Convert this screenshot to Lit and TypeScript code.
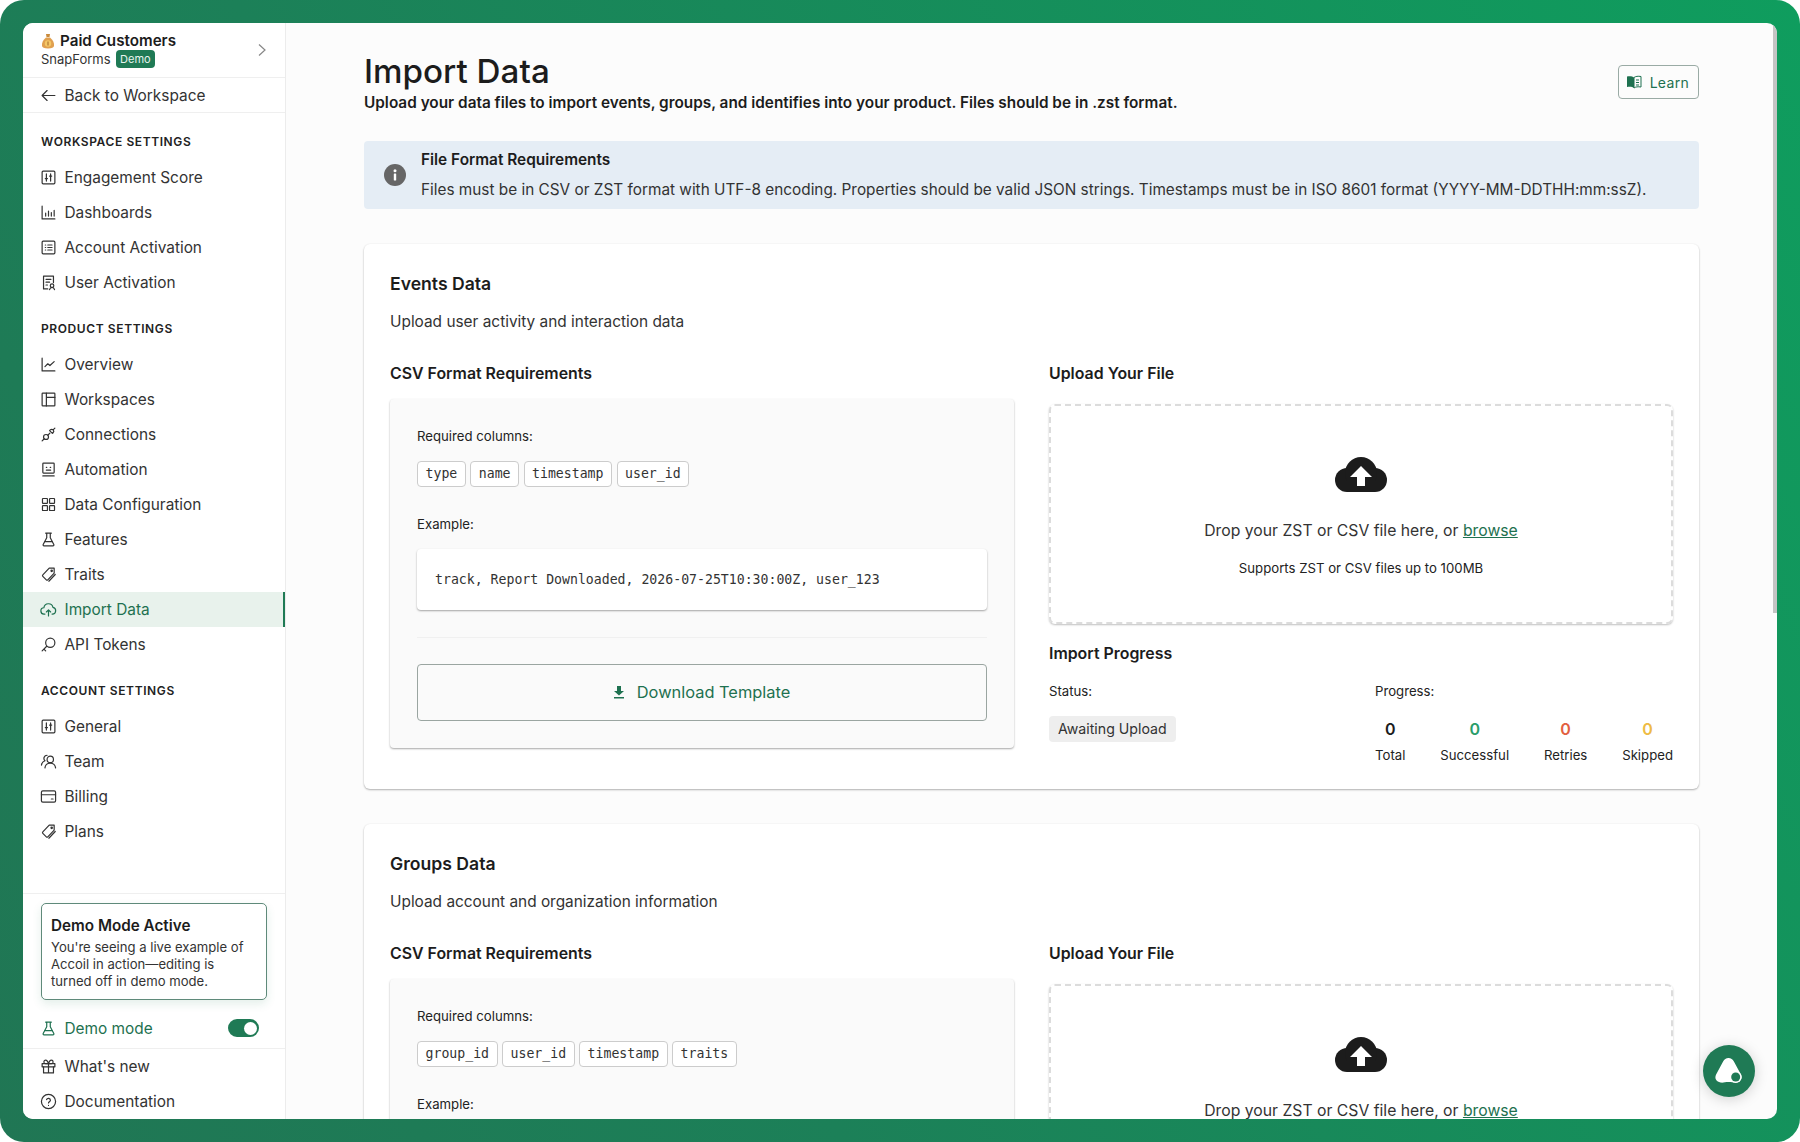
import { LitElement, html, css, svg } from 'lit';
import { customElement } from 'lit/decorators.js';

const G = css`#1f7a55`;
const GT = css`#1e7150`;

const line = (body: unknown, size = 17) => html`<svg class="ico" width=${size} height=${size} viewBox="0 0 24 24" fill="none" stroke="currentColor" stroke-width="1.7" stroke-linecap="round" stroke-linejoin="round">${body}</svg>`;

const sliders = svg`<rect x="3" y="3" width="18" height="18" rx="1.5"/><path d="M9 7v10M15 7v10"/><path d="M7.5 13.5h3M13.5 10h3"/>`;
const tag = svg`<path d="M13 3h7v7l-9 9.5a1.5 1.5 0 0 1-2.1 0L4 14.6a1.5 1.5 0 0 1 0-2.1z"/><circle cx="16.5" cy="6.8" r="1"/><path d="M21.5 12 12.5 21.5"/>`;
const flask = svg`<path d="M8 3h8M9.5 3v6.5L4.5 19a1.4 1.4 0 0 0 1.2 2h12.6a1.4 1.4 0 0 0 1.2-2L14.5 9.5V3"/><path d="M7 15h10"/>`;

const icons: Record<string, unknown> = {
  back: svg`<path d="M21 12H3M10 5l-7 7 7 7"/>`,
  sliders,
  bars: svg`<path d="M3 3v18h18"/><path d="M8 17v-4M12 17v-7M16 17v-5M20 17V9"/>`,
  list: svg`<rect x="3" y="3" width="18" height="18" rx="1.5"/><path d="M11 8.5h6M11 12h6M11 15.5h6M7.5 8.5h.5M7.5 12h.5M7.5 15.5h.5"/>`,
  userdoc: svg`<path d="M11 21H5V3h14v9"/><path d="M8.5 7.5h7M8.5 11.5h5M8.5 15.5h2"/><circle cx="17" cy="16.5" r="2.5"/><path d="M13.5 22c.5-2 2-3 3.5-3s3 1 3.5 3"/>`,
  chart: svg`<path d="M3 3v18h18"/><path d="M7 15l4-4 3 2.5L20 8"/>`,
  layout: svg`<rect x="3" y="3" width="18" height="18" rx="1"/><path d="M9 3v18M9 9h12"/>`,
  plug: svg`<path d="M3 21l3-3"/><circle cx="8.5" cy="15.5" r="3.5"/><path d="M11 13l3-3"/><path d="M13.5 6.5l4 4 1-1a2.8 2.8 0 0 0-4-4zM18.5 5.5 21 3"/>`,
  robot: svg`<rect x="4" y="3" width="16" height="14" rx="1"/><path d="M9 9h.5M14.5 9h.5M9 13h6M4 21h16"/>`,
  grid: svg`<rect x="3.5" y="3.5" width="7" height="7" rx=".8"/><rect x="13.5" y="3.5" width="7" height="7" rx=".8"/><rect x="3.5" y="13.5" width="7" height="7" rx=".8"/><rect x="13.5" y="13.5" width="7" height="7" rx=".8"/>`,
  flask,
  tag,
  cloud: svg`<path d="M7 18.5H6a4.5 4.5 0 0 1-.5-9 6.5 6.5 0 0 1 12.8-.5 4.8 4.8 0 0 1-.8 9.5H17"/><path d="M12 21v-8M9 15.5l3-3 3 3"/>`,
  key: svg`<circle cx="14.5" cy="9.5" r="6.5"/><path d="M9.5 14.5 3 21M5.5 18.5 8 21"/>`,
  team: svg`<circle cx="14.5" cy="9" r="4.5"/><path d="M7 21c.4-4 3.5-6.5 7.5-6.5S21.5 17 22 21"/><path d="M10 3.2A4.5 4.5 0 0 0 7 11c-2.5 1-4.5 3-5 6"/>`,
  card: svg`<rect x="2" y="4" width="20" height="16" rx="2"/><path d="M2 9.5h20M16 15.5h2.5"/>`,
  gift: svg`<rect x="3" y="8" width="18" height="4.5"/><path d="M5 12.5V21h14v-8.5M12 8v13"/><path d="M12 8S10.5 3 8 3a2.5 2.5 0 0 0 0 5zM12 8s1.5-5 4-5a2.5 2.5 0 0 1 0 5z"/>`,
  help: svg`<circle cx="12" cy="12" r="10"/><path d="M9.3 9.3a2.8 2.8 0 0 1 5.4.9c0 1.8-2.7 2.3-2.7 3.8M12 17.5h.01"/>`,
};

type Item = { label: string; icon: string; active?: boolean };

const sections: { title: string; items: Item[] }[] = [
  { title: 'WORKSPACE SETTINGS', items: [
    { label: 'Engagement Score', icon: 'sliders' },
    { label: 'Dashboards', icon: 'bars' },
    { label: 'Account Activation', icon: 'list' },
    { label: 'User Activation', icon: 'userdoc' },
  ] },
  { title: 'PRODUCT SETTINGS', items: [
    { label: 'Overview', icon: 'chart' },
    { label: 'Workspaces', icon: 'layout' },
    { label: 'Connections', icon: 'plug' },
    { label: 'Automation', icon: 'robot' },
    { label: 'Data Configuration', icon: 'grid' },
    { label: 'Features', icon: 'flask' },
    { label: 'Traits', icon: 'tag' },
    { label: 'Import Data', icon: 'cloud', active: true },
    { label: 'API Tokens', icon: 'key' },
  ] },
  { title: 'ACCOUNT SETTINGS', items: [
    { label: 'General', icon: 'sliders' },
    { label: 'Team', icon: 'team' },
    { label: 'Billing', icon: 'card' },
    { label: 'Plans', icon: 'tag' },
  ] },
];

const imports = [
  {
    title: 'Events Data',
    sub: 'Upload user activity and interaction data',
    cols: ['type', 'name', 'timestamp', 'user_id'],
    example: 'track, Report Downloaded, 2026-07-25T10:30:00Z, user_123',
  },
  {
    title: 'Groups Data',
    sub: 'Upload account and organization information',
    cols: ['group_id', 'user_id', 'timestamp', 'traits'],
    example: 'group, Acme Inc, 2026-07-25T10:30:00Z, user_123',
  },
];

const stats = [
  { label: 'Total', cls: '' },
  { label: 'Successful', cls: 'ok' },
  { label: 'Retries', cls: 'retry' },
  { label: 'Skipped', cls: 'skip' },
];

@customElement('app-root')
export class AppRoot extends LitElement {
  static styles = css`
    :host {
      display: block;
      width: 1800px;
      height: 1142px;
      font-family: Inter, 'Noto Sans', sans-serif;
      color: #1c1c1c;
      background: #fff;
    }
    * { box-sizing: border-box; }
    .frame {
      height: 1142px;
      padding: 23px;
      border-radius: 24px;
      background: linear-gradient(62deg, #207654 0%, #1c8058 35%, #0f9d5e 100%);
    }
    .window {
      position: relative;
      display: flex;
      height: 1096px;
      border-radius: 10px;
      overflow: hidden;
      background: #fcfcfc;
    }
    .side {
      flex: none;
      display: flex;
      flex-direction: column;
      width: 263px;
      height: 100%;
      background: #fff;
      border-right: 1px solid #ececec;
    }
    .head {
      display: flex;
      align-items: center;
      justify-content: space-between;
      height: 55px;
      padding: 0 18px 1px;
      border-bottom: 1px solid #efefef;
    }
    .head-title {
      display: flex;
      align-items: center;
      gap: 5px;
      font-size: 15.2px;
      font-weight: 600;
      line-height: 18px;
    }
    .head-sub {
      display: flex;
      align-items: center;
      gap: 5px;
      font-size: 13px;
      line-height: 18px;
      color: #333;
    }
    .badge {
      padding: 0 4.5px;
      height: 18px;
      border-radius: 4px;
      background: ${G};
      color: #e8f4ee;
      font-size: 11px;
      line-height: 18px;
    }
    .chev { color: #888; }
    .row {
      display: flex;
      align-items: center;
      gap: 8px;
      height: 35px;
      padding-left: 16.5px;
      font-size: 15.4px;
      color: #333;
    }
    .row.active {
      background: #e8f2ec;
      color: ${GT};
      border-right: 2px solid ${G};
    }
    .ico { flex: none; display: block; }
    .back { border-bottom: 1px solid #efefef; }
    .nav { padding-top: 18.5px; }
    .group { margin-bottom: 18.5px; }
    .group h4 {
      margin: 0 0 8.5px;
      padding-left: 18px;
      font-size: 12px;
      line-height: 20px;
      font-weight: 600;
      letter-spacing: .6px;
      color: #222;
    }
    .foot {
      margin-top: auto;
      height: 226px;
      border-top: 1px solid #efefef;
    }
    .demo {
      margin: 9px 18px 0;
      height: 97px;
      padding: 12px 18px 0 9px;
      border: 1px solid #5f8a7a;
      border-radius: 5px;
      background: #fff;
      box-shadow: 0 4px 10px rgba(31, 122, 85, .12);
    }
    .demo b {
      display: block;
      font-size: 15.25px;
      font-weight: 600;
      line-height: 20px;
      margin-bottom: 2.5px;
    }
    .demo p {
      margin: 0;
      font-size: 13.1px;
      line-height: 17px;
      color: #333;
    }
    .mode {
      display: flex;
      align-items: center;
      gap: 8px;
      height: 39px;
      margin-top: 10px;
      padding: 0 26px 2px 16.5px;
      border-bottom: 1px solid #efefef;
      font-size: 15.4px;
      color: ${GT};
    }
    .toggle {
      margin-left: auto;
      display: flex;
      justify-content: flex-end;
      align-items: center;
      width: 31px;
      height: 18px;
      padding: 2px;
      border-radius: 9px;
      background: ${G};
    }
    .toggle i {
      width: 13px;
      height: 13px;
      border-radius: 50%;
      background: #fff;
    }
    .main {
      flex: 1;
      min-width: 0;
      height: 100%;
      overflow: hidden;
      padding: 28px 78px 0;
    }
    .top {
      display: flex;
      justify-content: space-between;
      align-items: flex-start;
    }
    h1 {
      margin: 0 0 1px;
      font-size: 33.2px;
      line-height: 40px;
      font-weight: 500;
      color: #1c1c1c;
    }
    .lead {
      margin: 0;
      font-size: 15.35px;
      line-height: 22px;
      font-weight: 600;
      color: #1c1c1c;
    }
    .learn {
      display: flex;
      align-items: center;
      gap: 8px;
      height: 34px;
      margin-top: 14px;
      padding: 0 9px 0 6.5px;
      border: 1px solid #9aaba5;
      border-radius: 4px;
      font-size: 14px;
      letter-spacing: .3px;
      color: ${GT};
    }
    .note {
      display: flex;
      align-items: center;
      gap: 15px;
      height: 68px;
      margin-top: 27px;
      padding: 0 0 0 20px;
      border-radius: 4px;
      background: #e5edf5;
      font-size: 15.35px;
      color: #333;
    }
    .note b {
      display: block;
      font-size: 15.4px;
      font-weight: 600;
      line-height: 20px;
      margin-bottom: 10px;
      color: #1c1c1c;
    }
    .note span { display: block; line-height: 20px; }
    .card {
      margin-top: 35px;
      padding: 28px 26px 25.5px;
      background: #fff;
      border-radius: 6px;
      box-shadow: 0 1px 2px rgba(0, 0, 0, .3), 0 0 2px rgba(0, 0, 0, .04);
    }
    h2 {
      margin: 0;
      font-size: 17.6px;
      line-height: 24px;
      font-weight: 600;
    }
    .card > p {
      margin: 15px 0 0;
      font-size: 15.4px;
      line-height: 22px;
      color: #333;
    }
    .cols {
      display: grid;
      grid-template-columns: 624px 624px;
      gap: 35px;
      margin-top: 28.5px;
    }
    h3 {
      margin: 0;
      font-size: 15.9px;
      line-height: 24px;
      font-weight: 600;
    }
    .panel {
      margin-top: 13px;
      padding: 28px 27px 27px;
      background: #fafafa;
      border-radius: 4px;
      box-shadow: 0 1px 2px rgba(0, 0, 0, .35);
    }
    .small {
      font-size: 13.2px;
      line-height: 18px;
      color: #222;
    }
    .chips {
      display: flex;
      gap: 4.5px;
      margin: 16px 0 28px;
    }
    .chip {
      height: 26px;
      padding: 0 7.5px;
      border: 1px solid #ccc;
      border-radius: 4px;
      background: #fff;
      font-family: 'DejaVu Sans Mono', monospace;
      font-size: 13.2px;
      line-height: 24px;
      color: #333;
    }
    .code {
      height: 61px;
      margin-top: 16px;
      padding: 0 18px;
      background: #fff;
      border-radius: 4px;
      box-shadow: 0 1px 2px rgba(0, 0, 0, .35);
      font-family: 'DejaVu Sans Mono', monospace;
      font-size: 13.2px;
      line-height: 61px;
      color: #333;
    }
    .sep {
      height: 1px;
      margin: 27px 0 26px;
      background: #f0f0f0;
    }
    .dl {
      display: flex;
      align-items: center;
      justify-content: center;
      gap: 11px;
      height: 57px;
      padding-right: 2px;
      border: 1px solid #9aa5a1;
      border-radius: 4px;
      font-size: 16.4px;
      color: ${GT};
    }
    .drop {
      display: flex;
      flex-direction: column;
      align-items: center;
      height: 220px;
      margin-top: 18px;
      padding-top: 51px;
      border: 2px dashed #dcdcdc;
      border-radius: 6px;
      box-shadow: 0 1px 2px rgba(0, 0, 0, .25);
    }
    .drop .cta {
      margin-top: 27px;
      font-size: 15.75px;
      line-height: 24px;
      color: #333;
    }
    .drop a {
      color: ${GT};
      text-decoration: underline;
    }
    .drop .small { margin-top: 16px; }
    .prog { margin-top: 18px; }
    .status {
      display: flex;
      justify-content: space-between;
      margin-top: 16px;
    }
    .pill {
      margin-top: 16px;
      height: 26px;
      width: fit-content;
      padding: 0 9px;
      border-radius: 4px;
      background: #eee;
      font-size: 14.15px;
      line-height: 26px;
      color: #333;
    }
    .right { width: 298px; }
    .stats {
      display: flex;
      justify-content: space-between;
      margin-top: 18px;
    }
    .stat { text-align: center; }
    .stat b {
      display: block;
      font-size: 16px;
      font-weight: 600;
      line-height: 22px;
      margin-bottom: 6px;
    }
    .stat .ok { color: #2a9d6a; }
    .stat .retry { color: #e2603f; }
    .stat .skip { color: #eebb44; }
    .bubble {
      position: absolute;
      right: 22px;
      bottom: 22px;
      width: 52px;
      height: 52px;
      border-radius: 50%;
      background: ${G};
      box-shadow: 0 2px 14px rgba(0, 0, 0, .18);
    }
    .thumb {
      position: absolute;
      top: 0;
      right: 0;
      width: 4.5px;
      height: 590px;
      background: #c4c4c4;
    }
  `;

  private ico(name: string, size = 17) {
    return line(icons[name], size);
  }

  private sidebar() {
    return html`
      <aside class="side">
        <div class="head">
          <div>
            <div class="head-title">
              <svg width="14" height="16" viewBox="0 0 14 16" class="ico"><path d="M5 1h4L8.5 4h-3z" fill="#c98a3c"/><path d="M5 4.5h4C12 7 13.5 10 13 13c-.3 1.6-2 2.5-6 2.5S1.3 14.6 1 13C.5 10 2 7 5 4.5z" fill="#e0a050"/><circle cx="7" cy="10.5" r="3.2" fill="#f4c766"/><path d="M7 8.5v4" stroke="#a5672a" stroke-width="1"/></svg>
              Paid Customers
            </div>
            <div class="head-sub">SnapForms <span class="badge">Demo</span></div>
          </div>
          <svg class="chev" width="10" height="14" viewBox="0 0 10 14" fill="none" stroke="currentColor" stroke-width="1.2"><path d="M2 1.5 8 7l-6 5.5"/></svg>
        </div>
        <div class="row back">${this.ico('back')}Back to Workspace</div>
        <nav class="nav">
          ${sections.map(s => html`
            <div class="group">
              <h4>${s.title}</h4>
              ${s.items.map(i => html`<div class="row ${i.active ? 'active' : ''}">${this.ico(i.icon)}${i.label}</div>`)}
            </div>`)}
        </nav>
        <div class="foot">
          <div class="demo">
            <b>Demo Mode Active</b>
            <p>You're seeing a live example of Accoil in action—editing is turned off in demo mode.</p>
          </div>
          <div class="mode">${this.ico('flask')}Demo mode<span class="toggle"><i></i></span></div>
          <div class="row">${this.ico('gift')}What's new</div>
          <div class="row">${this.ico('help')}Documentation</div>
        </div>
      </aside>`;
  }

  private card(c: (typeof imports)[number]) {
    return html`
      <section class="card">
        <h2>${c.title}</h2>
        <p>${c.sub}</p>
        <div class="cols">
          <div>
            <h3>CSV Format Requirements</h3>
            <div class="panel">
              <div class="small">Required columns:</div>
              <div class="chips">${c.cols.map(n => html`<span class="chip">${n}</span>`)}</div>
              <div class="small">Example:</div>
              <div class="code">${c.example}</div>
              <div class="sep"></div>
              <div class="dl">
                <svg width="14" height="14" viewBox="0 0 14 14" fill="currentColor"><path d="M5 1h4v5h3L7 10.5 2 6h3zM2 12h10v1.5H2z"/></svg>
                Download Template
              </div>
            </div>
          </div>
          <div>
            <h3>Upload Your File</h3>
            <div class="drop">
              <svg width="52" height="35" viewBox="0 0 52 35" fill="#1c1c1c"><circle cx="12" cy="23" r="12"/><circle cx="40" cy="23" r="12"/><circle cx="26" cy="16" r="16"/><rect x="12" y="16" width="28" height="19"/><path fill="#fff" d="M26 9 37 20h-7v9h-8v-9h-7z"/></svg>
              <div class="cta">Drop your ZST or CSV file here, or <a>browse</a></div>
              <div class="small">Supports ZST or CSV files up to 100MB</div>
            </div>
            <h3 class="prog">Import Progress</h3>
            <div class="status">
              <div>
                <div class="small">Status:</div>
                <div class="pill">Awaiting Upload</div>
              </div>
              <div class="right">
                <div class="small">Progress:</div>
                <div class="stats">
                  ${stats.map(s => html`<div class="stat"><b class=${s.cls}>0</b><div class="small">${s.label}</div></div>`)}
                </div>
              </div>
            </div>
          </div>
        </div>
      </section>`;
  }

  render() {
    return html`
      <div class="frame">
        <div class="window">
          ${this.sidebar()}
          <main class="main">
            <div class="top">
              <div>
                <h1>Import Data</h1>
                <p class="lead">Upload your data files to import events, groups, and identifies into your product. Files should be in .zst format.</p>
              </div>
              <div class="learn">
                <svg width="16" height="14" viewBox="0 0 16 14"><path d="M8 2.5C6.5 1.3 4 1 1 1.5V12c3-.5 5.5-.2 7 1z" fill="currentColor"/><path d="M8 2.5c1.5-1.2 4-1.500 7-1V12c-3-.5-5.5-.2-7 1z" fill="none" stroke="currentColor"/><path d="M10 5h3M10 7.5h3M10 10h3" stroke="currentColor"/></svg>
                Learn
              </div>
            </div>
            <div class="note">
              <svg width="22" height="22" viewBox="0 0 22 22" class="ico"><circle cx="11" cy="11" r="11" fill="#666"/><rect x="9.8" y="9.5" width="2.4" height="7" rx=".6" fill="#fff"/><circle cx="11" cy="6.7" r="1.5" fill="#fff"/></svg>
              <div>
                <b>File Format Requirements</b>
                <span>Files must be in CSV or ZST format with UTF-8 encoding. Properties should be valid JSON strings. Timestamps must be in ISO 8601 format (YYYY-MM-DDTHH:mm:ssZ).</span>
              </div>
            </div>
            ${imports.map(c => this.card(c))}
          </main>
          <div class="thumb"></div>
          <div class="bubble">
            <svg width="52" height="52" viewBox="0 0 52 52"><path fill="#fff" d="M25.5 13c2.5 0 4.2 1.4 5.4 3.5l7 13c2 3.8-.5 7.5-4.4 8-2.5.3-4.5-.5-8-.5s-5.5 1-8 .5c-3.9-.8-6.4-3.7-4.4-8l7-13C21.3 14.4 23 13 25.5 13z"/><circle cx="32.7" cy="32" r="6" fill="#fff"/><circle cx="32.7" cy="32" r="4.5" fill="#1f7a55"/></svg>
          </div>
        </div>
      </div>`;
  }
}
